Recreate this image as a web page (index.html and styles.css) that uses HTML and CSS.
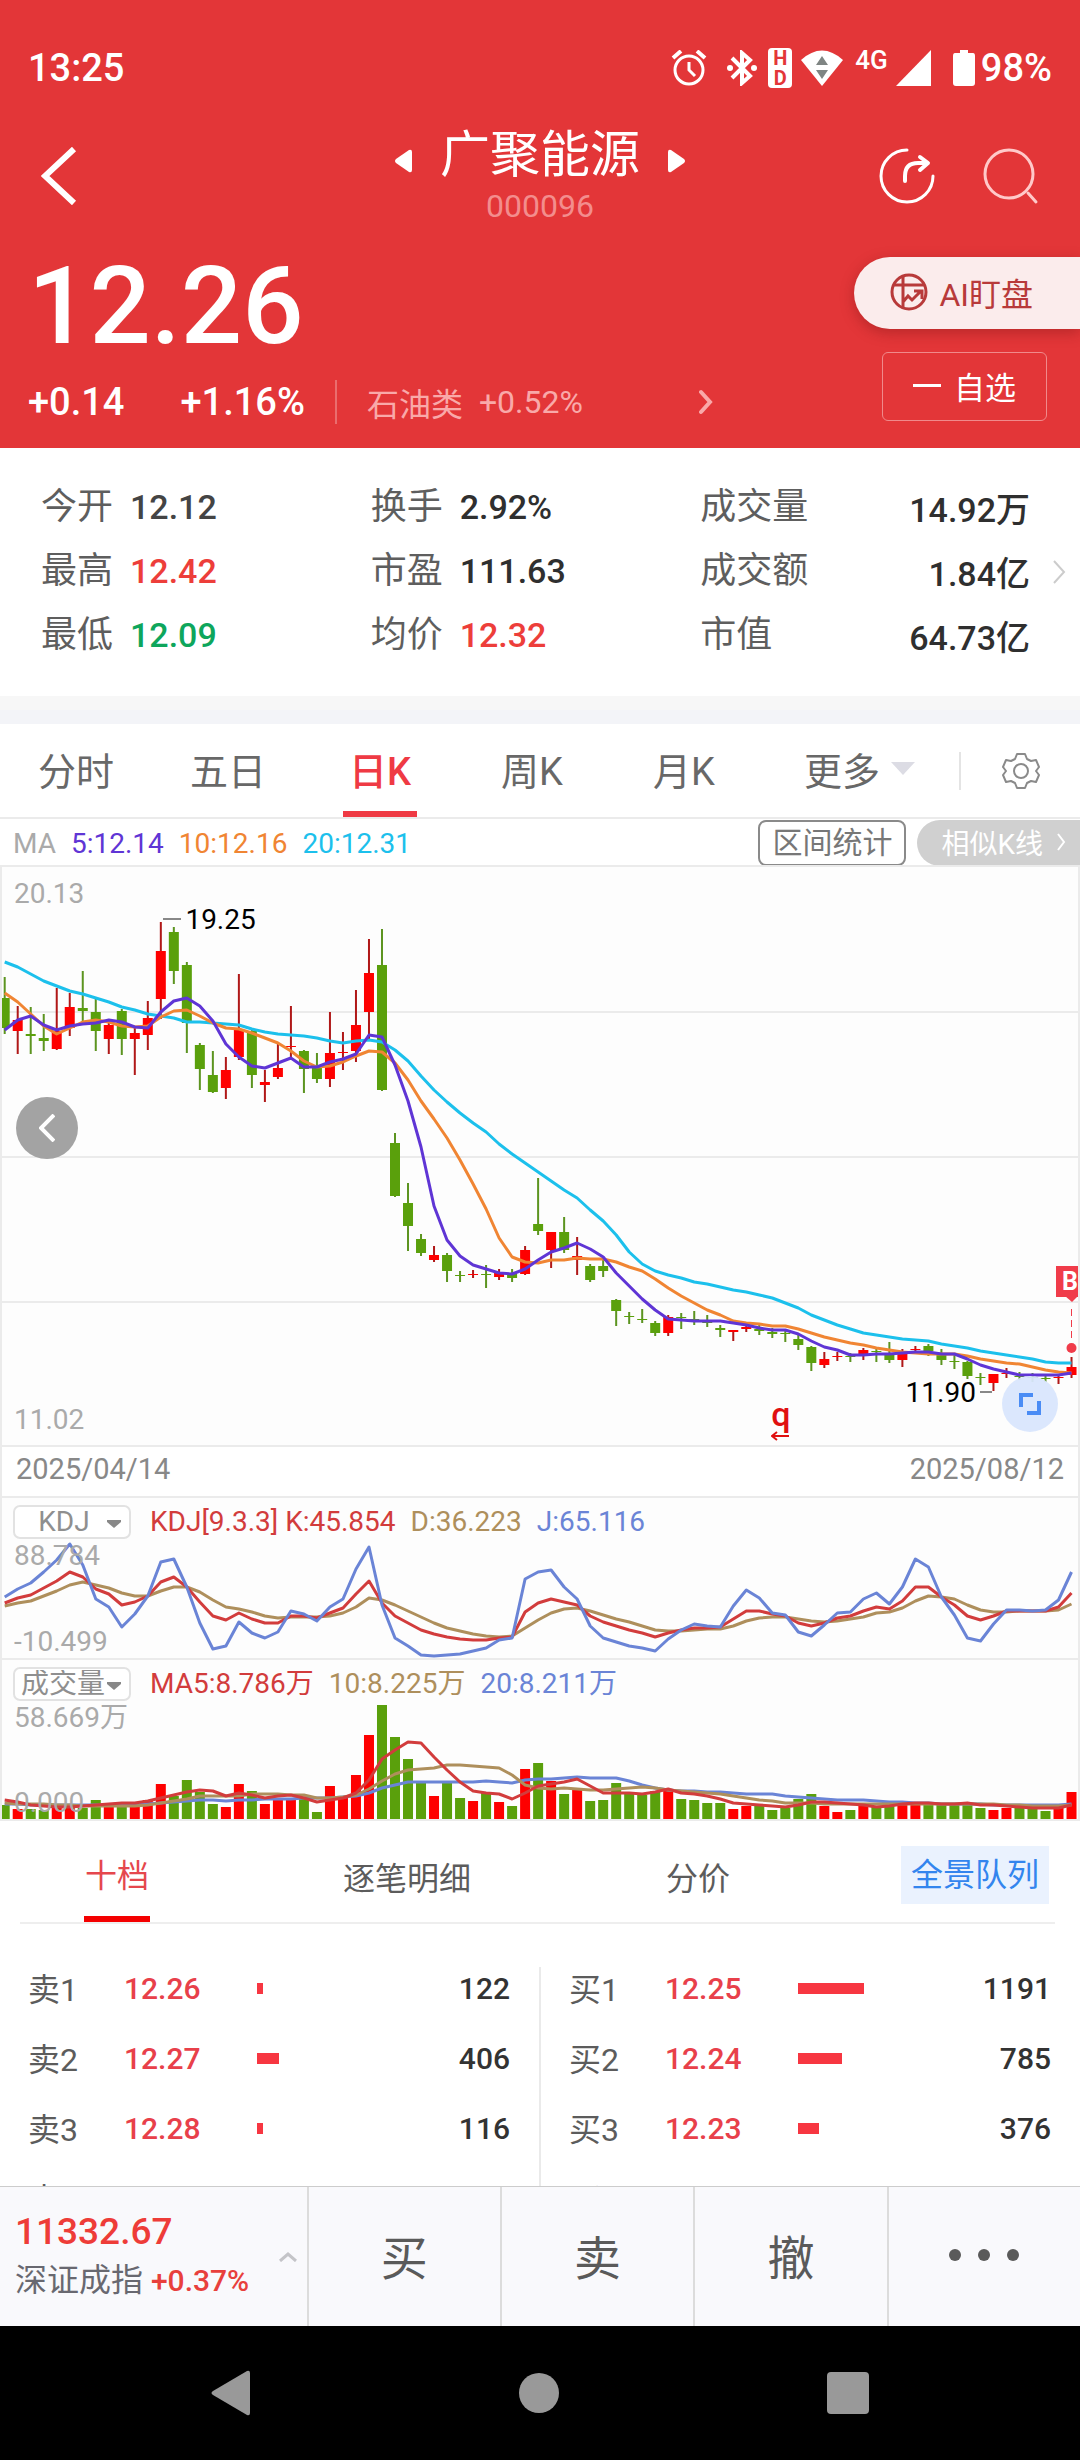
FILE: index.html
```html
<!DOCTYPE html>
<html lang="zh-CN">
  <head>
    <meta charset="UTF-8" />
    <meta name="viewport" content="width=device-width, initial-scale=1.0" />
    <title>广聚能源 000096</title>
    <link rel="stylesheet" href="styles.css">
  </head>
  <body>
    <div class="app">
      <header class="header">
        <div class="status-bar">
          <span class="clock">13:25</span>
          <div class="status-icons">
            <svg class="alarm" width="36" height="36" viewBox="0 0 36 36" fill="none" stroke="#fff" stroke-width="3">
              <circle cx="18" cy="20" r="14" />
              <path d="M18 12v8l6 6" />
              <path d="M2 8l8-7M34 8l-8-7" stroke-width="4" />
            </svg>
            <svg class="bluetooth" width="30" height="36" viewBox="0 0 30 36" fill="none" stroke="#fff" stroke-width="4">
              <path d="M5 8l18 18-8 7V3l8 7L5 28" />
              <circle cx="3" cy="18" r="3" fill="#fff" stroke="none" />
              <circle cx="27" cy="18" r="3" fill="#fff" stroke="none" />
            </svg>
            <span class="hd"><b>H</b><b>D</b></span>
            <svg class="wifi" width="42" height="36" viewBox="0 0 42 36">
              <path d="M0 10Q21-9 42 10L21 36z" fill="#fff" />
              <path d="M15 15l6-9 6 9zM15 20l6 9 6-9z" fill="#7f8583" />
            </svg>
            <span class="net">4G</span>
            <svg class="signal" width="35" height="36" viewBox="0 0 35 36"><path d="M35 0v36H0z" fill="#fff" /></svg>
            <svg class="battery" width="22" height="36" viewBox="0 0 22 36">
              <path d="M7 0h8v3h5q2 0 2 3v27q0 3-3 3H3q-3 0-3-3V6q0-3 2-3h5z" fill="#fff" />
            </svg>
            <span class="percent">98%</span>
          </div>
        </div>

        <div class="title-bar">
          <button class="icon-button back" aria-label="返回">
            <svg width="36" height="58" viewBox="0 0 36 58" fill="none" stroke="#fff" stroke-width="6">
              <path d="M33 2L4 29l29 27" />
            </svg>
          </button>
          <div class="title">
            <div class="title-row">
              <button class="icon-button step" aria-label="上一只">
                <svg width="17" height="24" viewBox="0 0 17 24"><path d="M1 10L14 1q3-1 3 2v18q0 3-3 2L1 14q-2-2 0-4z" fill="#fff" /></svg>
              </button>
              <h1>广聚能源</h1>
              <button class="icon-button step" aria-label="下一只">
                <svg width="17" height="24" viewBox="0 0 17 24"><path d="M16 10L3 1Q0 0 0 3v18q0 3 3 2l13-9q2-2 0-4z" fill="#fff" /></svg>
              </button>
            </div>
            <div class="code">000096</div>
          </div>
          <div class="title-actions">
            <button class="icon-button" aria-label="分享">
              <svg width="56" height="56" viewBox="0 0 56 56" fill="none" stroke="#fff" stroke-width="3" stroke-linecap="round" stroke-linejoin="round">
                <path d="M28 2A26 26 0 1 0 54 28" />
                <path d="M26 33V28q0-13 13-13h9M41 9l8 6-8 7" stroke-width="4" />
              </svg>
            </button>
            <button class="icon-button" aria-label="搜索">
              <svg width="56" height="58" viewBox="0 0 56 58" fill="none" stroke="#ffc9c9" stroke-width="3" stroke-linecap="round">
                <circle cx="26" cy="27" r="24" />
                <path d="M45 46l8 9" />
              </svg>
            </button>
          </div>
        </div>

        <div class="quote">
          <div class="quote-main">
            <div class="price">12.26</div>
            <div class="change">
              <span class="diff">+0.14</span>
              <span class="rate">+1.16%</span>
              <a class="sector" href="#sector">
                <span>石油类</span>
                <span class="sector-rate">+0.52%</span>
                <svg width="14" height="26" viewBox="0 0 14 26" fill="none" stroke="#f9a9a9" stroke-width="4" stroke-linecap="round"><path d="M2 3l9 10-9 10" /></svg>
              </a>
            </div>
          </div>
          <div class="quote-actions">
            <button class="ai-button">
              <svg width="38" height="38" viewBox="0 0 38 38" fill="none" stroke="#b83a3a" stroke-width="3">
                <circle cx="19" cy="19" r="17" />
                <path d="M4 12h31M13 3v32M13 29l5-6 4 4 9-9M24 18h8v8" />
              </svg>
              AI盯盘
            </button>
            <button class="fav-button"><span class="minus"></span>自选</button>
          </div>
        </div>
      </header>

      <section class="stats">
        <dl>
          <div><dt>今开</dt><dd class="plain">12.12</dd></div>
          <div><dt>换手</dt><dd>2.92%</dd></div>
          <div class="wide"><dt>成交量</dt><dd>14.92万</dd></div>
          <div><dt>最高</dt><dd class="up">12.42</dd></div>
          <div><dt>市盈</dt><dd>111.63</dd></div>
          <div class="wide"><dt>成交额</dt><dd>1.84亿</dd></div>
          <div><dt>最低</dt><dd class="down">12.09</dd></div>
          <div><dt>均价</dt><dd class="up">12.32</dd></div>
          <div class="wide"><dt>市值</dt><dd>64.73亿</dd></div>
        </dl>
        <svg width="14" height="24" viewBox="0 0 14 24" fill="none" stroke="#ccc" stroke-width="2"><path d="M2 1l10 11L2 23" /></svg>
      </section>

      <nav class="period-tabs">
        <button>分时</button>
        <button>五日</button>
        <button class="active">日K</button>
        <button>周K</button>
        <button>月K</button>
        <button class="more">更多<svg width="24" height="13" viewBox="0 0 24 13"><path d="M0 0h24L12 13z" fill="#dcdce4" /></svg></button>
        <button class="settings" aria-label="设置">
          <svg width="38" height="38" viewBox="0 0 38 38" fill="none" stroke="#8a8a8a" stroke-width="2" stroke-linejoin="round">
            <path d="M15 2h8l2 5 4 2 5-1 3 7-3 4 3 4-3 7-5-1-4 2-2 5h-8l-2-5-4-2-5 1-3-7 3-4-3-4 3-7 5 1 4-2z" />
            <circle cx="19" cy="19" r="7" />
          </svg>
        </button>
      </nav>

      <section class="charts">
        <div class="ma-row">
          <span class="muted">MA</span>
          <span class="ma5">5:12.14</span>
          <span class="ma10">10:12.16</span>
          <span class="ma20">20:12.31</span>
          <button class="range-button">区间统计</button>
          <button class="similar-button">相似K线<svg width="9" height="18" viewBox="0 0 9 18" fill="none" stroke="#fff" stroke-width="2"><path d="M1 1l6 8-6 8" /></svg></button>
        </div>

        <div class="panel kline">
          <svg class="plot" id="kline" viewBox="2 1 1076 578" preserveAspectRatio="none"></svg>
          <span class="axis">20.13</span>
          <span class="axis">11.02</span>
          <span class="mark high">19.25</span>
          <span class="mark low">11.90</span>
          <span class="event">q<svg width="18" height="10" viewBox="0 0 18 10" fill="none" stroke="#e01010" stroke-width="2"><path d="M18 5H1M6 1L1 5l5 4" /></svg></span>
          <span class="buy-tag">B</span>
          <button class="round-button scroll-left" aria-label="向前">
            <svg width="16" height="28" viewBox="0 0 16 28" fill="none" stroke="#fff" stroke-width="4"><path d="M15 1L2 14l13 13" /></svg>
          </button>
          <button class="round-button expand" aria-label="全屏">
            <svg width="22" height="22" viewBox="0 0 22 22" fill="none" stroke="#4a8cf5" stroke-width="4"><path d="M2 14V2h12M20 8v12H8" /></svg>
          </button>
        </div>

        <div class="dates"><span>2025/04/14</span><span>2025/08/12</span></div>

        <div class="panel sub">
          <svg class="plot" id="kdj" viewBox="2 1 1076 160" preserveAspectRatio="none"></svg>
          <div>
            <div class="legend">
              <label class="picker">
                <select aria-label="指标"><option>KDJ</option></select>
                <svg width="14" height="8" viewBox="0 0 14 8"><path d="M0 0h14v2L7 8 0 2z" fill="#888" /></svg>
              </label>
              <span class="c-red">KDJ[9.3.3] K:45.854</span>
              <span class="c-tan">D:36.223</span>
              <span class="c-blue">J:65.116</span>
            </div>
            <span class="axis">88.784</span>
          </div>
          <span class="axis">-10.499</span>
        </div>

        <div class="panel sub volume">
          <svg class="plot" id="volume" viewBox="2 1 1076 159" preserveAspectRatio="none"></svg>
          <div>
            <div class="legend">
              <label class="picker">
                <select aria-label="副图"><option>成交量</option></select>
                <svg width="14" height="8" viewBox="0 0 14 8"><path d="M0 0h14v2L7 8 0 2z" fill="#888" /></svg>
              </label>
              <span class="c-red">MA5:8.786万</span>
              <span class="c-tan">10:8.225万</span>
              <span class="c-blue">20:8.211万</span>
            </div>
            <span class="axis">58.669万</span>
          </div>
          <span class="axis">0.000</span>
        </div>
      </section>

      <section class="book">
        <nav class="book-tabs">
          <button class="active">十档</button>
          <button>逐笔明细</button>
          <button>分价</button>
          <a href="#queue">全景队列</a>
        </nav>
        <div class="depth">
          <table>
            <tr><th>卖1</th><td class="p">12.26</td><td><i class="bar" style="width: 6px"></i></td><td class="n">122</td></tr>
            <tr><th>卖2</th><td class="p">12.27</td><td><i class="bar" style="width: 22px"></i></td><td class="n">406</td></tr>
            <tr><th>卖3</th><td class="p">12.28</td><td><i class="bar" style="width: 6px"></i></td><td class="n">116</td></tr>
            <tr><th>卖4</th><td class="p"></td><td></td><td class="n"></td></tr>
          </table>
          <div class="divider"></div>
          <table>
            <tr><th>买1</th><td class="p">12.25</td><td><i class="bar" style="width: 66px"></i></td><td class="n">1191</td></tr>
            <tr><th>买2</th><td class="p">12.24</td><td><i class="bar" style="width: 44px"></i></td><td class="n">785</td></tr>
            <tr><th>买3</th><td class="p">12.23</td><td><i class="bar" style="width: 21px"></i></td><td class="n">376</td></tr>
            <tr><th>买4</th><td class="p"></td><td></td><td class="n"></td></tr>
          </table>
        </div>
      </section>

      <footer class="trade-bar">
        <a class="index" href="#index">
          <span>
            <span class="index-value">11332.67</span>
            <span class="index-name">深证成指 <b>+0.37%</b></span>
          </span>
          <svg width="18" height="10" viewBox="0 0 18 10" fill="none" stroke="#c4c4c8" stroke-width="3"><path d="M1 9l8-7 8 7" /></svg>
        </a>
        <button>买</button>
        <button>卖</button>
        <button>撤</button>
        <button aria-label="更多">
          <svg width="70" height="12" viewBox="0 0 70 12" fill="#5a5a5a"><circle cx="6" cy="6" r="6" /><circle cx="35" cy="6" r="6" /><circle cx="64" cy="6" r="6" /></svg>
        </button>
      </footer>

      <div class="system-nav">
        <button aria-label="返回"><svg width="40" height="46" viewBox="0 0 40 46"><path d="M2 21L36 1q3-1 3 2v40q0 3-3 2L2 25q-3-2 0-4z" fill="#999" /></svg></button>
        <button aria-label="主页"><svg width="40" height="40" viewBox="0 0 40 40"><circle cx="20" cy="20" r="20" fill="#999" /></svg></button>
        <button aria-label="最近任务"><svg width="42" height="42" viewBox="0 0 42 42"><rect width="42" height="42" rx="4" fill="#999" /></svg></button>
      </div>
    </div>

    <script src="chart.js"></script>
  </body>
</html>
```
FILE: styles.css
```css
* {
  box-sizing: border-box;
}
body {
  margin: 0;
  background-color: #fff;
  color: #333;
  font-family: Roboto, "Noto Sans CJK SC", sans-serif;
}
button {
  margin: 0;
  padding: 0;
  border: none;
  background: none;
  color: inherit;
  font: inherit;
  cursor: pointer;
}
a {
  color: inherit;
  text-decoration: none;
}
svg {
  display: block;
  flex: none;
}
.app {
  display: flex;
  flex-direction: column;
  height: 100vh;
  overflow: hidden;
}
.app > * {
  flex: none;
}

/* header */
.header {
  background-color: #e33638;
  color: #fff;
}
.status-bar {
  display: flex;
  align-items: center;
  justify-content: space-between;
  height: 116px;
  padding: 20px 28px 0;
  font-size: 38px;
  font-weight: 500;
}
.status-icons {
  display: flex;
  align-items: center;
}
.bluetooth {
  margin-left: 20px;
}
.hd {
  display: flex;
  flex-direction: column;
  align-items: center;
  margin: 0 9px 0 11px;
  width: 24px;
  border-radius: 4px;
  background-color: #fff;
  color: #e33638;
  font-size: 20px;
  line-height: 20px;
}
.net {
  align-self: flex-start;
  margin: 0 8px 0 12px;
  font-size: 26px;
  line-height: 28px;
}
.battery {
  margin: 0 6px 0 22px;
}
.title-bar {
  display: grid;
  grid-template-columns: 1fr auto 1fr;
  align-items: center;
  height: 120px;
  padding: 0 41px;
}
.icon-button.back {
  justify-self: start;
}
.title-row {
  display: flex;
  align-items: center;
  gap: 28px;
}
.title-row h1 {
  margin: 0;
  font-size: 50px;
  font-weight: 400;
  line-height: 60px;
}
.step {
  padding-top: 12px;
}
.code {
  color: #f38d8d;
  font-size: 32px;
  line-height: 42px;
  text-align: center;
}
.title-actions {
  display: flex;
  justify-content: flex-end;
  gap: 48px;
}
.quote {
  display: flex;
  justify-content: space-between;
  height: 212px;
}
.quote-main {
  padding: 6px 0 0 28px;
}
.price {
  font-size: 108px;
  font-weight: 500;
  line-height: 128px;
}
.change {
  display: flex;
  align-items: center;
  margin-top: 10px;
  height: 44px;
  font-size: 38px;
  font-weight: 500;
}
.rate {
  margin-left: 56px;
}
.sector {
  display: flex;
  align-items: center;
  margin-left: 30px;
  padding-left: 30px;
  height: 44px;
  border-left: 2px solid #ea6d6e;
  color: #f9a9a9;
  font-size: 32px;
  font-weight: 400;
}
.sector-rate {
  margin: 0 116px 0 16px;
}
.quote-actions {
  display: flex;
  flex-direction: column;
  align-items: flex-end;
  gap: 23px;
  padding-top: 21px;
}
.ai-button {
  display: flex;
  align-items: center;
  gap: 11px;
  height: 72px;
  padding: 0 47px 2px 36px;
  border-radius: 36px 0 0 36px;
  background-color: #fbecec;
  box-shadow: 0 4px 14px rgba(120, 20, 20, 0.4);
  color: #b83a3a;
  font-size: 32px;
}
.fav-button {
  display: flex;
  align-items: center;
  gap: 13px;
  height: 69px;
  margin-right: 33px;
  padding: 0 30px 2px;
  border: 1px solid #f08a8b;
  border-radius: 6px;
  font-size: 31px;
}
.minus {
  width: 28px;
  height: 3px;
  background-color: #fff;
}

/* key figures */
.stats {
  display: flex;
  align-items: center;
  padding: 26px 14px 26px 41px;
  border-bottom: 14px solid #f3f4f8;
  box-shadow: inset 0 -14px 0 #f7f7f7;
  height: 276px;
}
.stats dl {
  flex: 1;
  display: grid;
  grid-template-columns: repeat(3, 1fr);
  grid-auto-rows: 64px;
  margin: 0 22px 16px 0;
}
.stats dl div {
  display: flex;
  align-items: center;
  gap: 17px;
}
.stats .wide {
  justify-content: space-between;
}
.stats dt {
  color: #5e5e5e;
  font-size: 36px;
  line-height: 60px;
}
.stats dd {
  margin: 0;
  color: #2f2f2f;
  font-size: 34px;
  font-weight: 500;
}
.stats dd.plain {
  color: #444;
}
.stats dd.up {
  color: #ed3e3a;
}
.stats dd.down {
  color: #0ea65c;
}
.stats svg {
  margin-bottom: 14px;
}

/* period tabs */
.period-tabs {
  display: grid;
  grid-template-columns: repeat(5, 152fr) 199fr 121fr;
  height: 93px;
  color: #686868;
  font-size: 38px;
}
.period-tabs button {
  display: flex;
  align-items: center;
  justify-content: center;
  padding-bottom: 4px;
}
.period-tabs .active {
  justify-self: center;
  width: 74px;
  padding: 4px 0 2px;
  border-bottom: 6px solid #ef3a44;
  color: #ef3a44;
  font-weight: 500;
}
.period-tabs .more {
  justify-content: flex-start;
  gap: 11px;
  padding-left: 44px;
}
.period-tabs .settings {
  align-self: center;
  height: 38px;
  padding: 0;
  border-left: 2px solid #e4e4e4;
}

/* charts */
.charts {
  font-size: 28px;
}
.ma-row {
  display: flex;
  align-items: center;
  gap: 15px;
  height: 48px;
  padding: 2px 0 0 13px;
  border-top: 2px solid #ebebeb;
}
.muted,
.axis {
  color: #aaa;
}
.ma5 {
  color: #5f35d5;
}
.ma10 {
  color: #f08533;
}
.ma20 {
  color: #1cc0ec;
}
.range-button {
  margin-left: auto;
  height: 46px;
  padding: 0 12px;
  border: 2px solid #8a8a8a;
  border-radius: 8px;
  color: #777;
  font-size: 30px;
  line-height: 40px;
}
.similar-button {
  display: flex;
  align-items: center;
  gap: 14px;
  height: 46px;
  margin-left: -4px;
  padding: 0 14px 2px 24px;
  border-radius: 23px 0 0 23px;
  background-color: #d0d0d0;
  color: #fff;
}
.panel {
  position: relative;
  display: flex;
  flex-direction: column;
  justify-content: space-between;
  border: 2px solid #ebebeb;
  border-bottom: none;
  background-color: #fdfdfd;
}
.plot {
  position: absolute;
  inset: 0;
  width: 100%;
  height: 100%;
}
.plot .grid {
  stroke: #ebebeb;
  stroke-width: 2;
}
.plot polyline {
  fill: none;
  stroke-width: 3;
  stroke-linejoin: round;
}
.axis {
  position: relative;
  padding-left: 12px;
  line-height: 32px;
}
.kline {
  height: 580px;
  padding: 11px 0 9px;
}
.mark {
  position: absolute;
  color: #000;
  line-height: 32px;
}
.mark::before,
.mark.low::after {
  content: "";
  display: inline-block;
  width: 18px;
  height: 2px;
  margin-right: 4px;
  background-color: #888;
  vertical-align: 9px;
}
.mark.high {
  left: 15%;
  top: 37px;
}
.mark.low {
  right: 8%;
  top: 510px;
}
.mark.low::before {
  display: none;
}
.mark.low::after {
  width: 12px;
  margin: 0 0 0 4px;
}
.event {
  position: absolute;
  left: 71.5%;
  top: 530px;
  color: #e01010;
  font-size: 34px;
  font-weight: 500;
  line-height: 34px;
}
.buy-tag {
  position: absolute;
  right: 0;
  top: 399px;
  width: 22px;
  padding-left: 6px;
  overflow: hidden;
  background-color: #f03c4a;
  color: #fff;
  font-size: 25px;
  font-weight: 700;
  line-height: 31px;
}
.round-button {
  position: absolute;
  display: flex;
  align-items: center;
  justify-content: center;
  border-radius: 50%;
}
.scroll-left {
  left: 14px;
  top: 230px;
  width: 62px;
  height: 62px;
  background-color: #a3a3a3;
}
.expand {
  right: 20px;
  top: 509px;
  width: 56px;
  height: 56px;
  background-color: rgba(217, 230, 253, 0.94);
}
.dates {
  display: flex;
  justify-content: space-between;
  height: 51px;
  padding: 0 14px;
  border: 2px solid #ebebeb;
  border-bottom: none;
  color: #888;
  font-size: 29px;
  line-height: 44px;
}
.sub {
  height: 162px;
}
.volume {
  height: 163px;
  border-bottom: 2px solid #ebebeb;
}
.legend {
  position: relative;
  display: flex;
  align-items: center;
  gap: 15px;
  padding: 7px 11px 0;
  line-height: 34px;
}
.picker {
  position: relative;
  margin-right: 4px;
}
.picker select {
  appearance: none;
  display: block;
  width: 118px;
  height: 34px;
  padding: 0 24px 0 8px;
  border: 2px solid #e2e2e2;
  border-radius: 7px;
  background-color: #fff;
  color: #8f8f8f;
  font: inherit;
  line-height: 28px;
  text-align-last: center;
}
.volume .picker select {
  padding: 0 22px 0 4px;
}
.picker svg {
  position: absolute;
  right: 10px;
  top: 15px;
}
.c-red {
  color: #d23c3c;
}
.c-tan {
  color: #ae8f5c;
}
.c-blue {
  color: #6a84d6;
}

/* order book */
.app > .book {
  flex: 1;
  min-height: 0;
  overflow: hidden;
}
.book-tabs {
  display: grid;
  grid-template-columns: 194fr 386fr 196fr 259fr;
  align-items: center;
  height: 103px;
  margin: 0 25px 0 20px;
  border-bottom: 2px solid #eee;
  color: #5c5c5c;
  font-size: 32px;
}
.book-tabs button {
  height: 101px;
  padding-top: 8px;
}
.book-tabs .active {
  justify-self: center;
  padding: 8px 1px 0;
  border-bottom: 6px solid #f40000;
  color: #e5474d;
}
.book-tabs a {
  justify-self: end;
  margin: 6px 6px 0 0;
  padding: 0 10px;
  background-color: #eaf2fe;
  color: #3385ee;
  line-height: 58px;
}
.depth {
  display: grid;
  grid-template-columns: 1fr 2px 1fr;
  padding-top: 29px;
}
.divider {
  margin-top: 14px;
  background-color: #eaeaea;
}
.depth table {
  table-layout: fixed;
  width: auto;
  margin: 0 29px 0 28px;
  border-collapse: collapse;
}
.depth tr {
  height: 70px;
}
.depth th {
  width: 96px;
  padding: 0 0 2px;
  color: #5c5c5c;
  font-size: 32px;
  font-weight: 400;
  text-align: left;
}
.depth td {
  padding: 0;
  font-size: 30px;
  font-weight: 500;
}
.depth .p {
  width: 133px;
  color: #e8404a;
}
.depth .n {
  width: 90px;
  text-align: right;
}
.bar {
  display: block;
  height: 11px;
  background-color: #f73641;
}

/* bottom bars */
.trade-bar {
  display: grid;
  grid-template-columns: 306fr repeat(4, 193fr);
  height: 140px;
  border-top: 1px solid #ccc;
  background-color: #f9f9fc;
  color: #5a5a5a;
  font-size: 47px;
}
.trade-bar button {
  display: flex;
  align-items: center;
  justify-content: center;
  padding-bottom: 4px;
  border-left: 2px solid #dcdcdc;
}
.index {
  display: flex;
  align-items: center;
  justify-content: space-between;
  padding: 0 10px 0 15px;
}
.index-value {
  display: block;
  color: #ee3c38;
  font-size: 37px;
  font-weight: 500;
  line-height: 48px;
}
.index-name {
  display: block;
  color: #686870;
  font-size: 32px;
  line-height: 48px;
  white-space: nowrap;
}
.index-name b {
  color: #e8403c;
  font-size: 30px;
  font-weight: 500;
}
.system-nav {
  display: flex;
  align-items: center;
  justify-content: space-between;
  height: 134px;
  padding: 0 211px;
  background-color: #000;
}
```
FILE: chart.js
```js
const RED = "#fe0000";
const GREEN = "#5aa00c";
const RED_WICK = "#b01818";
const GREEN_WICK = "#5c9420";
const STEP = 13.01;
const FIRST = 4.7;

// [up, high, body top, body bottom, low]
const candles = [
  [0,111,132,162,168],[1,140,154,165,188],[0,141,168,170,188],[0,148,172,175,185],
  [1,122,165,183,184],[1,127,141,162,170],[0,105,142,145,159],[0,133,146,165,185],
  [1,155,159,173,188],[0,143,145,173,189],[1,162,167,173,209],[1,135,152,169,184],
  [1,56,85,133,153],[0,61,66,105,118],[0,96,99,157,187],[0,177,179,203,224],
  [0,185,209,226,227],[1,191,204,222,233],[1,108,164,191,194],[0,162,165,209,222],
  [1,204,216,219,236],[1,178,202,211,213],[1,140,180,180,193],[0,184,185,203,227],
  [0,187,201,213,217],[1,146,187,213,221],[1,166,186,186,204],[1,124,159,185,196],
  [1,73,107,146,174],[0,63,99,224,225],[0,267,277,330,331],[0,317,337,360,385],
  [0,368,373,387,390],[1,380,389,394,396],[0,387,389,405,416],[0,405,409,409,416],
  [1,404,408,408,412],[0,399,408,408,422],[1,403,406,411,414],[0,403,407,412,416],
  [1,380,384,408,409],[0,312,358,365,369],[1,366,366,384,402],[0,351,366,384,387],
  [1,371,390,394,409],[0,398,400,414,416],[0,394,400,405,411],[0,433,434,445,460],
  [0,446,450,450,458],[0,443,453,453,457],[0,455,457,467,470],[1,449,451,467,470],
  [0,447,451,451,463],[0,445,453,453,459],[0,449,456,457,461],[0,459,462,464,471],
  [1,464,464,466,475],[1,458,461,463,466],[0,457,463,465,469],[0,462,466,468,472],
  [0,464,467,467,476],[0,469,473,479,484],[0,480,481,497,505],[1,486,493,499,502],
  [1,486,490,491,495],[0,487,490,490,496],[1,482,484,490,494],[0,481,485,486,496],
  [0,476,488,494,497],[1,483,488,494,501],[1,480,483,484,487],[0,478,480,485,490],
  [0,483,488,494,499],[0,489,495,495,503],[0,495,496,510,513],[0,507,511,511,519],
  [1,508,508,517,525],[1,502,507,508,512],[0,506,510,510,514],[0,507,511,511,516],
  [0,508,512,513,516],[1,508,511,512,518],[1,491,501,509,512]
];

const ma5 = [164,154,150,159,164,160,158,157,154,156,161,162,146,135,132,140,155,178,191,200,202,197,192,201,201,196,193,188,169,171,199,235,281,340,374,390,399,403,407,408,403,394,386,382,377,383,391,407,420,433,444,453,454,455,455,455,457,459,462,464,464,468,475,481,484,489,489,488,488,487,486,486,488,488,493,499,503,506,509,509,509,509,507];
const ma10 = [127,136,148,160,168,162,156,154,156,160,161,160,151,145,144,150,157,162,163,167,172,177,185,195,201,200,196,190,185,186,197,214,235,253,272,294,318,343,372,391,396,397,394,394,392,393,393,396,401,405,413,422,430,437,444,449,455,457,458,460,460,463,467,471,474,477,479,482,484,486,487,488,488,488,490,493,495,497,498,501,504,506,507];
const ma20 = [96,101,108,115,120,125,128,132,136,141,144,148,150,152,156,156,157,158,159,163,166,168,169,170,172,175,177,175,174,176,184,195,210,224,236,247,257,266,278,288,297,306,315,324,332,344,355,369,386,398,405,409,412,416,418,421,424,426,429,432,437,442,449,454,459,463,467,469,471,473,474,475,478,480,482,485,487,489,491,493,496,497,497];

const lineK = [106,101,98,91,84,75,80,92,97,108,105,99,85,80,90,105,119,123,116,122,126,126,119,119,121,116,111,97,84,106,119,126,133,137,140,142,143,143,141,140,115,106,102,105,108,119,125,129,133,136,140,136,133,131,131,130,122,114,114,117,119,126,129,126,121,119,114,110,112,104,90,90,100,108,119,123,119,114,114,114,114,110,96];
const lineD = [109,106,104,99,94,88,85,88,91,96,99,99,94,90,90,95,103,110,112,115,119,121,120,120,120,119,116,110,101,103,108,114,120,126,131,134,137,139,140,139,131,123,116,112,111,114,118,122,125,129,133,134,134,133,132,132,129,124,121,120,120,122,124,125,124,122,120,116,115,111,104,99,100,102,108,113,115,115,114,114,114,113,107];
const lineJ = [100,92,86,75,63,47,68,102,110,130,117,99,65,62,90,126,152,149,125,136,141,135,114,117,124,110,102,72,50,108,141,149,158,159,158,157,154,151,143,141,82,75,73,90,102,129,141,145,149,151,154,142,133,127,129,130,109,93,101,116,118,135,139,128,116,115,102,96,107,90,62,70,100,118,141,144,127,113,113,114,113,103,75];

const volumes = [14,10,10,9,11,11,11,19,12,14,14,19,35,23,39,27,15,12,35,28,15,19,21,20,7,33,21,44,84,114,82,60,37,23,38,21,18,26,17,13,50,56,38,25,29,18,19,36,25,24,28,28,20,19,16,16,10,13,13,9,11,20,25,13,7,9,13,12,13,14,14,14,14,14,14,11,9,11,11,11,8,11,27];
const vol5 = [141,143,146,147,148,148,147,146,145,144,144,142,139,136,133,131,132,137,134,136,139,137,136,139,143,141,139,134,121,100,91,83,84,98,111,123,132,134,135,140,134,127,125,123,120,127,134,134,134,135,133,130,134,135,137,140,144,145,146,147,148,146,143,143,144,145,146,148,147,145,144,144,145,145,144,146,146,147,148,149,149,149,146];
const vol10 = [144,145,145,145,146,146,147,147,147,147,147,146,144,142,140,137,137,137,137,135,135,135,136,136,139,139,138,136,130,122,115,111,110,109,106,106,107,108,109,116,126,129,130,129,130,131,131,130,129,128,129,131,132,133,134,135,137,139,141,142,144,144,144,145,145,145,145,145,145,145,145,145,145,145,145,145,145,146,146,147,147,147,146];
const vol20 = [145,145,146,146,146,146,146,146,146,146,146,145,144,143,142,141,141,142,141,141,140,140,140,139,139,139,138,137,134,129,126,123,123,123,123,123,123,122,123,124,121,120,120,119,118,119,119,119,122,126,129,131,132,132,133,133,134,135,135,135,137,138,139,140,141,141,141,142,143,143,144,144,145,145,145,145,146,146,146,146,146,146,145];

function xAt(i) {
  return FIRST + i * STEP;
}

function line(values, color) {
  const points = values.map((y, i) => xAt(i).toFixed(1) + "," + y).join(" ");
  return `<polyline points="${points}" stroke="${color}" />`;
}

function drawKline() {
  let out = "";
  for (const y of [146, 291, 436]) {
    out += `<line class="grid" x1="0" x2="1080" y1="${y}" y2="${y}" />`;
  }
  candles.forEach(([up, high, top, bottom, low], i) => {
    const x = xAt(i);
    const h = Math.max(bottom - top, 1);
    out += `<rect x="${x - 1}" y="${high}" width="2" height="${low - high}" fill="${up ? RED_WICK : GREEN_WICK}" />`;
    out += `<rect x="${x - 5}" y="${top}" width="10" height="${h}" fill="${up ? RED : GREEN}" />`;
  });
  out += line(ma20, "#1cc0ec") + line(ma10, "#f08533") + line(ma5, "#5f35d5");
  // buy marker
  out += `<path d="M1065 430h13l-6 6z" fill="#f03c4a" />`;
  out += `<path d="M1071.5 443v30" stroke="#f03c4a" stroke-width="1" stroke-dasharray="7 4" />`;
  out += `<circle cx="1071.5" cy="482" r="5" fill="#f03c4a" />`;
  document.getElementById("kline").innerHTML = out;
}

function drawKdj() {
  document.getElementById("kdj").innerHTML =
    line(lineD, "#ae8f5c") + line(lineK, "#d23c3c") + line(lineJ, "#6a84d6");
}

function drawVolume() {
  let out = "";
  volumes.forEach((v, i) => {
    out += `<rect x="${xAt(i) - 5}" y="${160 - v}" width="10" height="${v}" fill="${candles[i][0] ? RED : GREEN}" />`;
  });
  out += line(vol20, "#6a84d6") + line(vol10, "#ae8f5c") + line(vol5, "#d23c3c");
  document.getElementById("volume").innerHTML = out;
}

drawKline();
drawKdj();
drawVolume();
```
